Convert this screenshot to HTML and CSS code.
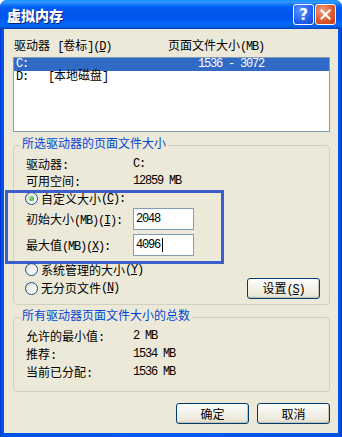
FILE: index.html
```html
<!DOCTYPE html>
<html lang="zh-CN">
<head>
  <meta charset="UTF-8" />
  <title>虚拟内存</title>
  <link rel="stylesheet" href="styles.css">
</head>
<body>
  <div class="window">
    <div class="titlebar">
      <span class="title">虚拟内存</span>
      <div class="cap-btns">
        <span class="cap-btn help">?</span>
        <span class="cap-btn close">
          <svg width="11" height="11" viewBox="0 0 11 11"><path d="M1.5 1.5 L9.5 9.5 M9.5 1.5 L1.5 9.5" stroke="#fff" stroke-width="2.2" stroke-linecap="square"/></svg>
        </span>
      </div>
    </div>

    <div class="client">
      <div class="list-head">
        <span class="col-drive">驱动器 <span class="num">[</span>卷标<span class="num">](<u>D</u>)</span></span>
        <span>页面文件大小<span class="num">(MB)</span></span>
      </div>
      <div class="listbox">
        <div class="row sel"><span class="c1 num">C:</span><span class="c2"></span><span class="num">1536 - 3072</span></div>
        <div class="row"><span class="c1 num">D:</span><span class="c2"><span class="num">[</span>本地磁盘<span class="num">]</span></span></div>
      </div>

      <fieldset class="group g1">
        <legend>所选驱动器的页面文件大小</legend>
        <div class="info"><span class="k">驱动器<span class="num">:</span></span><span class="num">C:</span></div>
        <div class="info"><span class="k">可用空间<span class="num">:</span></span><span class="num">12859 MB</span></div>
        <div class="custom">
          <div class="radio-row first"><span class="radio on"></span>自定义大小<span class="num">(<u>C</u>):</span></div>
          <div class="field"><span class="k">初始大小<span class="num">(MB)(<u>I</u>):</span></span><span class="input">2048</span></div>
          <div class="field"><span class="k">最大值<span class="num">(MB)(<u>X</u>):</span></span><span class="input">4096<span class="caret"></span></span></div>
          <div class="highlight"></div>
        </div>
        <div class="radio-row sys"><span class="radio"></span>系统管理的大小<span class="num">(<u>Y</u>)</span></div>
        <div class="radio-row none"><span class="radio"></span>无分页文件<span class="num">(<u>N</u>)</span><button class="btn set">设置<span class="num">(<u>S</u>)</span></button></div>
      </fieldset>

      <fieldset class="group g2">
        <legend>所有驱动器页面文件大小的总数</legend>
        <div class="info tall"><span class="k">允许的最小值<span class="num">:</span></span><span class="num">2 MB</span></div>
        <div class="info tall"><span class="k">推荐<span class="num">:</span></span><span class="num">1534 MB</span></div>
        <div class="info tall"><span class="k">当前已分配<span class="num">:</span></span><span class="num">1536 MB</span></div>
      </fieldset>

      <div class="actions">
        <button class="btn">确定</button>
        <button class="btn">取消</button>
      </div>
    </div>
  </div>
</body>
</html>
```

FILE: styles.css
```css
body {
  margin: 0;
  background: #fff;
  font-family: "Liberation Mono", "Noto Sans CJK SC", monospace;
  font-size: 12px;
  color: #000;
}
u {
  text-decoration: underline;
}
.window {
  width: 342px;
  height: 437px;
  box-sizing: border-box;
  background: linear-gradient(90deg, #0831d9, #0054e3 2px, #0058ee 50%, #0054e3 calc(100% - 2px), #0831d9);
  border-radius: 7px 7px 0 0;
  display: flex;
  flex-direction: column;
}
.titlebar {
  height: 29px;
  flex: none;
  display: flex;
  align-items: center;
  padding: 0 6px 0 7px;
  border-radius: 7px 7px 0 0;
  background: linear-gradient(#0997ff 0%, #3a93ff 8%, #1a7ffc 14%, #0366f8 22%, #0058ee 32%, #0055eb 60%, #005bf5 72%, #026afe 82%, #0062ef 90%, #0052d6 96%, #0040ab 100%);
}
.title {
  flex: 1;
  color: #fff;
  font-family: "Noto Sans CJK SC", sans-serif;
  font-weight: 900;
  font-size: 14px;
  letter-spacing: 0;
  text-shadow: 1px 1px #0a1e7d;
}
.cap-btns {
  display: flex;
  gap: 1px;
}
.cap-btn {
  width: 21px;
  height: 21px;
  box-sizing: border-box;
  border: 1px solid #fff;
  border-radius: 3px;
  display: flex;
  align-items: center;
  justify-content: center;
}
.help {
  background: radial-gradient(circle at 35% 30%, #5b95ff, #2261f0 60%, #1545c8);
  color: #fff;
  font-family: "DejaVu Sans", sans-serif;
  font-weight: bold;
  font-size: 15px;
}
.close {
  background: radial-gradient(circle at 35% 30%, #f0a080, #e05a30 55%, #c23a12);
}
.client {
  flex: 1;
  margin: 0 4px 4px;
  background: #ece9d8;
  padding: 11px 8px 9px 9px;
  display: flex;
  flex-direction: column;
}
.list-head {
  display: flex;
  height: 14px;
  line-height: 14px;
  padding-left: 1px;
}
.col-drive {
  width: 154px;
}
.listbox {
  margin-top: 3px;
  height: 75px;
  box-sizing: border-box;
  border: 1px solid #7f9db9;
  background: #fff;
}
.row {
  display: flex;
  height: 13px;
  line-height: 13px;
  padding-left: 2px;
}
.row.sel {
  background: #316ac5;
  color: #fff;
}
.c1 {
  width: 32px;
}
.c2 {
  width: 150px;
}
.num {
  letter-spacing: -1.2px;
}
.group {
  margin: 6px 0 0;
  padding: 3px 9px 6px 12px;
  border: 1px solid #d0d0bf;
  border-radius: 4px;
  min-width: 0;
}
.group legend {
  color: #0046d5;
  padding: 0 2px;
  margin-left: -6px;
  line-height: 14px;
}
.info {
  display: flex;
  align-items: center;
  height: 17px;
}
.info.tall {
  height: 18px;
}
.k {
  width: 107px;
  flex: none;
}
.custom {
  position: relative;
}
.radio-row {
  display: flex;
  align-items: center;
  height: 17px;
}
.radio-row.first {
  height: 19px;
}
.radio-row.sys {
  margin-top: 5px;
}
.radio-row.none {
  height: 20px;
}
.radio {
  width: 13px;
  height: 13px;
  box-sizing: border-box;
  border: 1px solid #1c5180;
  border-radius: 50%;
  background: linear-gradient(135deg, #dcd9cd, #fff 80%);
  margin: 0 3px 0 -1px;
  position: relative;
}
.radio.on::after {
  content: "";
  position: absolute;
  left: 3px;
  top: 3px;
  width: 5px;
  height: 5px;
  border-radius: 50%;
  background: radial-gradient(circle at 40% 40%, #8fe38d, #21a121);
}
.field {
  display: flex;
  align-items: center;
  height: 22px;
}
.field + .field {
  margin-top: 4px;
}
.input {
  width: 61px;
  height: 22px;
  box-sizing: border-box;
  border: 1px solid #7f9db9;
  background: #fff;
  padding: 0 2px;
  line-height: 20px;
  letter-spacing: -1.2px;
  display: flex;
  align-items: center;
}
.caret {
  width: 1px;
  height: 14px;
  background: #000;
  margin-left: 2px;
}
.highlight {
  position: absolute;
  left: -21px;
  top: 1px;
  width: 219px;
  height: 74px;
  box-sizing: border-box;
  border: 3px solid #3c5ecc;
  pointer-events: none;
}
.g2 {
  margin-top: 5px;
  padding-bottom: 10px;
}
.btn {
  font: inherit;
  color: #000;
  width: 73px;
  height: 21px;
  padding: 0;
  border: 1px solid #003c74;
  border-radius: 3px;
  background: linear-gradient(#ffffff, #f4f3ee 40%, #ece9d8 85%, #d6d0c5);
  box-shadow: inset -1px -1px 0 #c9c5b6;
}
.set {
  margin-left: auto;
}
.actions {
  display: flex;
  justify-content: flex-end;
  gap: 8px;
  margin-top: 11px;
}
```
